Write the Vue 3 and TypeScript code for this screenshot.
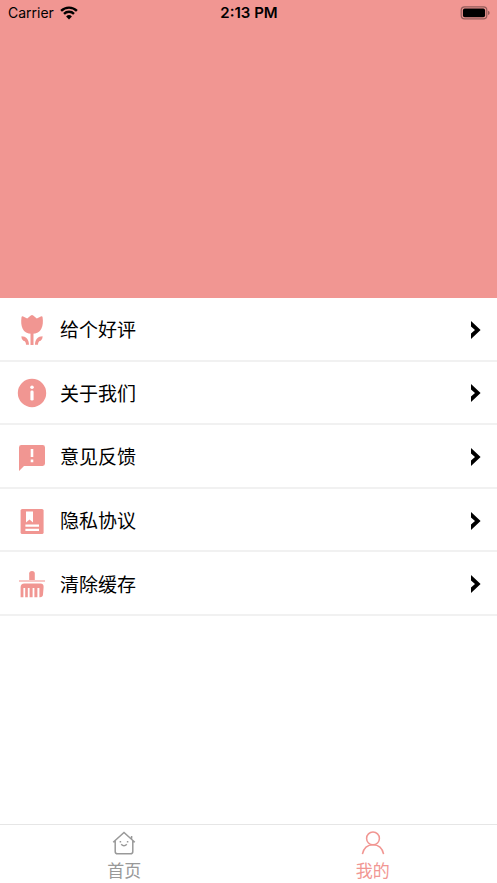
<script setup lang="ts">
import { ref } from 'vue'

type IconName = 'flower' | 'info' | 'feedback' | 'book' | 'brush'

interface MenuItem {
  icon: IconName
  label: string
}

const items: MenuItem[] = [
  { icon: 'flower', label: '给个好评' },
  { icon: 'info', label: '关于我们' },
  { icon: 'feedback', label: '意见反馈' },
  { icon: 'book', label: '隐私协议' },
  { icon: 'brush', label: '清除缓存' },
]

const activeTab = ref<'home' | 'mine'>('mine')
</script>

<template>
  <div class="page">
    <header class="hero">
      <div class="status">
        <div class="carrier">
          <span>Carrier</span>
          <svg class="wifi" viewBox="0 0 18 14" aria-hidden="true">
            <path d="M1.1 4.8A11.3 11.3 0 0 1 16.9 4.8" />
            <path d="M4 7.8A7.2 7.2 0 0 1 14 7.8" />
            <path class="dot" d="M9 13.4L6.1 10.5A4.1 4.1 0 0 1 11.9 10.5Z" />
          </svg>
        </div>
        <time class="clock">2:13 PM</time>
        <div class="power">
          <svg class="battery" viewBox="0 0 30 14" aria-hidden="true">
            <rect class="shell" x="1.2" y="0.9" width="25.6" height="12" rx="3.4" />
            <rect x="2.9" y="2.6" width="22.2" height="8.6" rx="1.8" />
            <path class="cap" d="M28 4.8Q29.7 5.4 29.7 6.9T28 9Z" />
          </svg>
        </div>
      </div>
    </header>

    <main class="content">
      <ul class="menu">
        <li v-for="item in items" :key="item.icon" class="cell">
          <button type="button" class="row">
            <svg class="icon" viewBox="0 0 32 32" aria-hidden="true">
              <template v-if="item.icon === 'flower'">
                <path d="M5.5 3.2Q5.8 1.8 7.2 2.4L11.2 4.6L14.8 1.4Q16 .5 17.2 1.4L20.8 4.6L24.8 2.4Q26.4 1.8 26.6 3.2C27.8 12 25.6 19.8 16 19.8S4.3 12 5.5 3.2Z" />
                <path d="M14.5 18H17.5V31H14.5Z" />
                <path d="M5.4 22.2C10 22.2 13 25.3 13 30.8H10C10 29 9.6 28 8.8 27.2C6.6 26.7 5.4 25 5.4 22.2Z" />
                <path d="M26.6 22.2C22 22.2 19 25.3 19 30.8H22C22 29 22.4 28 23.2 27.2C25.4 26.7 26.6 25 26.6 22.2Z" />
              </template>
              <template v-else-if="item.icon === 'info'">
                <circle cx="16" cy="16" r="14.2" />
                <circle class="cut" cx="16" cy="10.2" r="1.8" />
                <rect class="cut" x="14.4" y="13.6" width="3.2" height="10" rx="1.4" />
              </template>
              <template v-else-if="item.icon === 'feedback'">
                <path d="M5.4 4H26.6Q29 4 29 6.4V22.6Q29 25 26.6 25H8L3 30V6.4Q3 4 5.4 4Z" />
                <path class="cut" d="M14.7 8H17.3V16H14.7ZM14.7 18.6H17.3V21.2H14.7Z" />
              </template>
              <template v-else-if="item.icon === 'book'">
                <rect x="4.6" y="4" width="23" height="25" rx="1.6" />
                <path class="cut" d="M10 6.4H17V17.6L13.5 14.4L10 17.6ZM9.4 19.6H23V21.8H9.4ZM9.4 23.8H23V26H9.4Z" />
              </template>
              <template v-else>
                <path d="M13.2 12.2V5.6Q13.2 3 16 3T18.8 5.6V12.2Z" />
                <rect class="faint" x="3" y="12" width="26" height="2" />
                <path d="M4.6 29.2V19.2Q4.6 15.4 8.4 15.4H24.4Q28 15.4 27.6 19.2L27 26.6Q26.8 29.2 24 29.2H23.4V20H21.4V29.2H18.4V20H16.6V29.2H13.6V20H11.8V29.2H9.2V20H7.4V29.2Z" />
              </template>
            </svg>
            <span class="label">{{ item.label }}</span>
            <svg class="chevron" viewBox="0 0 10 18" aria-hidden="true">
              <path d="M0 0L9.6 9L0 18V12.6L4 9L0 5.4Z" />
            </svg>
          </button>
        </li>
      </ul>
    </main>

    <nav class="tabs">
      <button
        type="button"
        class="tab"
        :class="{ active: activeTab === 'home' }"
        @click="activeTab = 'home'"
      >
        <svg class="tab-icon" viewBox="0 0 24 24" aria-hidden="true">
          <path d="M1.2 11.2L12 1.4L22.8 11.2M3.2 9.8V20.4Q3.2 22.8 5.6 22.8H18.4Q20.8 22.8 20.8 20.4V9.8M19.6 7.8V5M8.4 10V11.6M15.6 10V11.6M9.2 13.2Q12 16.2 14.8 13.2" />
        </svg>
        <span>首页</span>
      </button>
      <button
        type="button"
        class="tab"
        :class="{ active: activeTab === 'mine' }"
        @click="activeTab = 'mine'"
      >
        <svg class="tab-icon" viewBox="0 0 24 24" aria-hidden="true">
          <circle cx="12" cy="7.4" r="6.4" />
          <path d="M1.4 23.2C2.6 17.4 6.6 13.8 12 13.8S21.4 17.4 22.6 23.2" />
        </svg>
        <span>我的</span>
      </button>
    </nav>
  </div>
</template>

<style>
body {
  margin: 0;
}
</style>

<style scoped>
.page {
  display: flex;
  flex-direction: column;
  min-height: 100vh;
  background: #fff;
  color: #000;
  font-family: Inter, "Noto Sans CJK SC", sans-serif;
}

.hero {
  min-height: 298px;
  background: #f19692;
}

.status {
  display: grid;
  grid-template-columns: 1fr auto 1fr;
  align-items: center;
  height: 25px;
  padding: 0 7px 0 8px;
  font-size: 14px;
}

.carrier {
  display: flex;
  align-items: center;
  gap: 6px;
}

.wifi {
  width: 18px;
  height: 14px;
  fill: none;
  stroke: #000;
  stroke-width: 2.4;
}

.wifi .dot {
  fill: #000;
  stroke: none;
}

.clock {
  font-size: 15px;
  font-weight: 600;
  line-height: 18px;
}

.power {
  display: flex;
  justify-content: flex-end;
}

.battery {
  width: 30px;
  height: 14px;
}

.battery .shell {
  fill: none;
  stroke: #925b59;
  stroke-width: 1.2;
}

.battery .cap {
  fill: #925b59;
}

.content {
  flex: 1;
}

.menu {
  display: grid;
  grid-auto-rows: 1fr;
  min-height: 318px;
  margin: 0;
  padding: 0;
  list-style: none;
}

.cell {
  display: flex;
  border-bottom: 2px solid #f1f1f1;
}

.row {
  display: flex;
  flex: 1;
  align-items: center;
  padding: 2px 16px 0;
  border: 0;
  background: none;
  color: inherit;
  font: inherit;
  font-size: 19px;
  line-height: 28px;
  text-align: left;
  cursor: pointer;
}

.icon {
  width: 32px;
  height: 32px;
  fill: #f19692;
}

.icon .cut {
  fill: #fff;
}

.icon .faint {
  fill: #f8c6c4;
}

.label {
  flex: 1;
  padding: 3px 0 0 12px;
}

.chevron {
  width: 10px;
  height: 18px;
}

.tabs {
  display: grid;
  grid-template-columns: 1fr 1fr;
  border-top: 1px solid #e6e6e6;
}

.tab {
  display: flex;
  flex-direction: column;
  align-items: center;
  gap: 4px;
  padding: 6px 0 0;
  border: 0;
  background: none;
  color: #999;
  font: inherit;
  font-size: 17px;
  line-height: 24px;
  cursor: pointer;
}

.tab.active {
  color: #f19692;
}

.tab-icon {
  width: 24px;
  height: 24px;
  fill: none;
  stroke: currentColor;
  stroke-width: 1.5;
}
</style>
